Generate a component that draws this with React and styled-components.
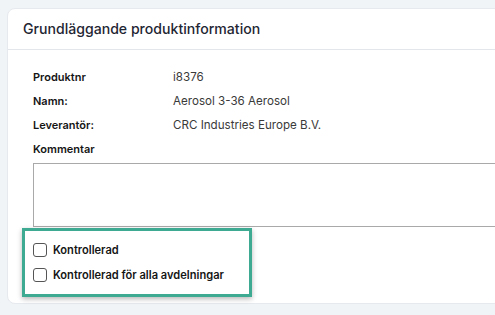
import React from 'react'
import styled, { createGlobalStyle } from 'styled-components'

const GlobalStyle = createGlobalStyle`
    html, body {
        margin: 0;
        padding: 0;
        background: #f1f4f7;
        overflow: hidden;
    }
    body {
        font-family: Inter, 'Noto Sans', sans-serif;
    }
`

const Page = styled.div`
    padding: 8px 0 0 7px;
    width: 495px;
    height: 315px;
    box-sizing: border-box;
    overflow: hidden;
`

const Card = styled.section`
    width: 540px;
    height: 296px;
    box-sizing: border-box;
    background: #fff;
    border: 1px solid #e6e9ed;
    border-radius: 8px;
    display: flex;
    flex-direction: column;
`

const CardHeader = styled.header`
    height: 41px;
    box-sizing: border-box;
    border-bottom: 1px solid #e3e6ea;
    display: flex;
    align-items: center;
    padding: 0 0 1px 15px;

    h2 {
        margin: 0;
        font-size: 14.1px;
        font-weight: 500;
        color: #1f2633;
    }
`

const CardBody = styled.div`
    padding: 15px 0 0 25px;
    display: flex;
    flex-direction: column;
`

const InfoRow = styled.div`
    height: 24px;
    display: flex;
    align-items: center;
`

const Label = styled.span`
    width: 140px;
    font-size: 11px;
    font-weight: 600;
    color: #151515;
`

const Value = styled.span`
    font-size: 11.6px;
    color: #3a3a3a;
`

const Comment = styled.textarea`
    margin-top: 2px;
    width: 100%;
    height: 64px;
    box-sizing: border-box;
    border: 1px solid #a9a9a9;
    resize: none;
    outline: none;
    display: block;
`

const CheckGroup = styled.div`
    margin: 1px 0 0 -11px;
    width: 230px;
    box-sizing: border-box;
    border: 3px solid #3daa91;
    box-shadow: 0 2px 5px rgba(0, 0, 0, 0.28);
    padding: 12px 8px 12px 8px;
    display: flex;
    flex-direction: column;
    gap: 11px;
`

const CheckRow = styled.label`
    display: flex;
    align-items: center;
    gap: 6px;
    font-size: 11.1px;
    font-weight: 600;
    color: #151515;
`

const Box = styled.span`
    width: 14px;
    height: 14px;
    box-sizing: border-box;
    border: 1px solid #555;
    border-radius: 3px;
    background: #fff;
`

const rows = [
    ['Produktnr', 'i8376'],
    ['Namn:', 'Aerosol 3-36 Aerosol'],
    ['Leverantör:', 'CRC Industries Europe B.V.']
]

export default function App() {
    return (
        <Page>
            <GlobalStyle />
            <Card>
                <CardHeader>
                    <h2>Grundläggande produktinformation</h2>
                </CardHeader>
                <CardBody>
                    {rows.map(([label, value]) => (
                        <InfoRow key={label}>
                            <Label>{label}</Label>
                            <Value>{value}</Value>
                        </InfoRow>
                    ))}
                    <InfoRow>
                        <Label>Kommentar</Label>
                    </InfoRow>
                    <Comment />
                    <CheckGroup>
                        <CheckRow>
                            <Box />
                            Kontrollerad
                        </CheckRow>
                        <CheckRow>
                            <Box />
                            Kontrollerad för alla avdelningar
                        </CheckRow>
                    </CheckGroup>
                </CardBody>
            </Card>
        </Page>
    )
}
